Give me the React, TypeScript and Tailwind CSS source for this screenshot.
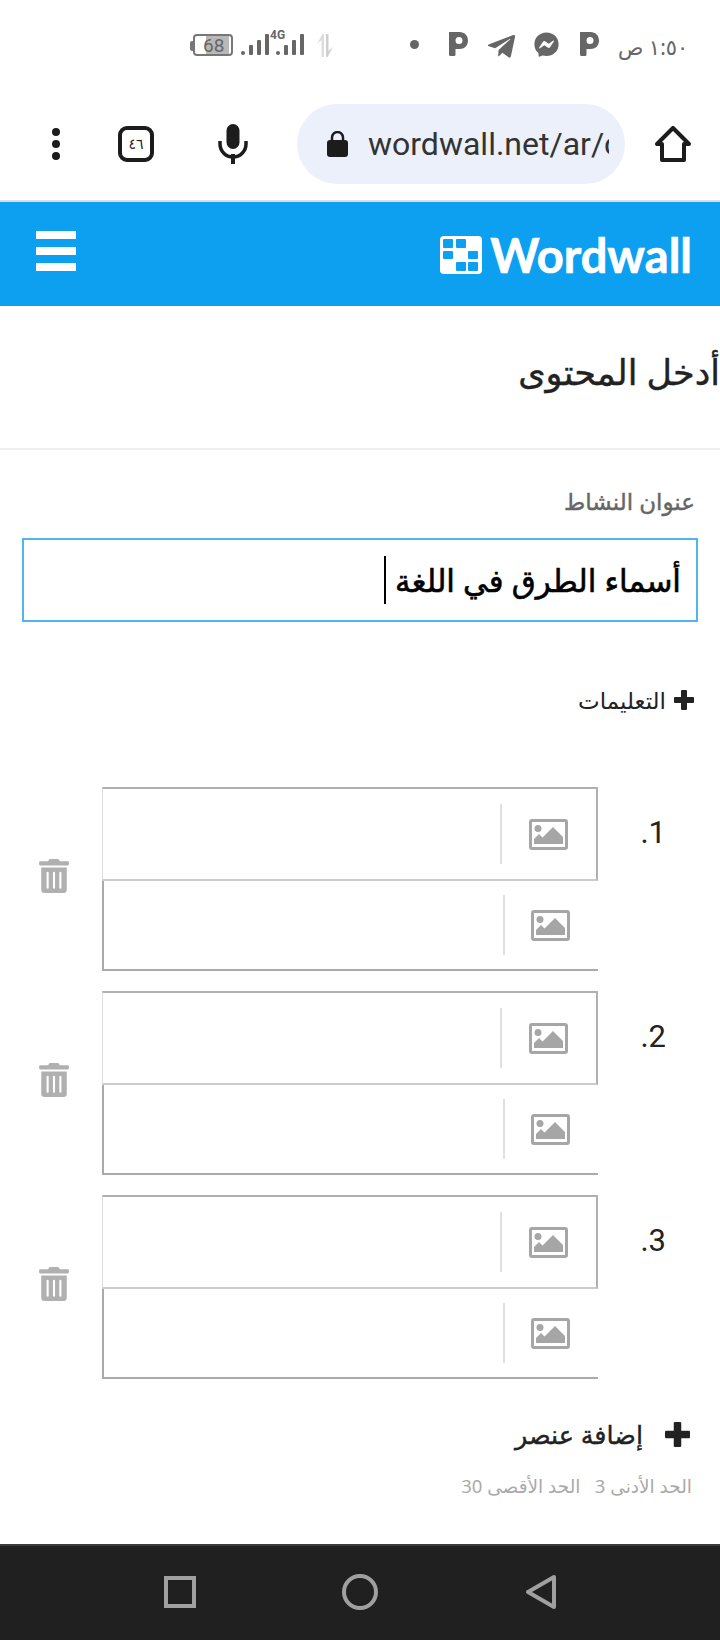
import { FaFacebookMessenger, FaTelegramPlane, FaTrashAlt } from "react-icons/fa";

const arabic = "font-['Noto_Sans','DejaVu_Sans',sans-serif]";

function PIcon() {
  return (
    <svg viewBox="0 0 19 24" className="w-[19px] h-[24px] text-[#666]" fill="currentColor">
      <path fillRule="evenodd" d="M0 0h10.500C15.500 0 19 3.500 19 8.500S15.500 17 10.500 17H6.500v5.500q0 1.500-1.500 1.500H1.500Q0 24 0 22.500zM10 5a3.500 3.500 0 1 0 0 7 3.500 3.500 0 0 0 0-7z" />
    </svg>
  );
}

function Signal() {
  return (
    <svg viewBox="0 0 63 21" className="w-[63px] h-[21px]" fill="#666">
      <rect x="0" y="17" width="4" height="4" rx="2" />
      <rect x="8" y="11" width="4" height="10" rx="1" />
      <rect x="16" y="6" width="4" height="15" rx="1" />
      <rect x="24" y="0" width="4" height="21" rx="1" />
      <rect x="35" y="17" width="4" height="4" rx="2" />
      <rect x="43" y="11" width="4" height="10" rx="1" />
      <rect x="51" y="6" width="4" height="15" rx="1" />
      <rect x="59" y="0" width="4" height="21" rx="1" />
    </svg>
  );
}

function ImageIcon() {
  return (
    <svg viewBox="0 0 39 31" className="w-[39px] h-[31px]">
      <rect x="1.500" y="1.500" width="36" height="28" rx="1.500" fill="none" stroke="#a6a6a6" strokeWidth="3" />
      <ellipse cx="9" cy="9.500" rx="3.500" ry="3.500" fill="#a6a6a6" />
      <path d="M5 25v-5l5-5 3.500 3.500L24 8l10 10v7z" fill="#a6a6a6" />
    </svg>
  );
}

function Plus({ size }: { size: string }) {
  return (
    <svg viewBox="0 0 20 20" className={size} fill="currentColor">
      <path d="M7 1a1 1 0 0 1 1-1h4a1 1 0 0 1 1 1v6h6a1 1 0 0 1 1 1v4a1 1 0 0 1-1 1h-6v6a1 1 0 0 1-1 1H8a1 1 0 0 1-1-1v-6H1a1 1 0 0 1-1-1V8a1 1 0 0 1 1-1h6z" />
    </svg>
  );
}

function Logo() {
  return (
    <svg viewBox="0 0 42 38" className="w-[42px] h-[38px]">
      <rect width="42" height="38" rx="4" fill="#fff" />
      <rect x="3" y="3" width="10" height="9" rx="1" fill="#0ea0f0" />
      <rect x="16" y="3" width="10" height="9" rx="1" fill="#0ea0f0" />
      <rect x="3" y="15" width="10" height="8" rx="1" fill="#0ea0f0" />
      <rect x="28" y="15" width="10" height="8" rx="1" fill="#0ea0f0" />
      <rect x="16" y="26" width="10" height="9" rx="1" fill="#0ea0f0" />
      <rect x="28" y="26" width="10" height="9" rx="1" fill="#0ea0f0" />
    </svg>
  );
}

function ItemRow({ n }: { n: number }) {
  return (
    <div className="flex h-[184px] mb-[20px]">
      <div className="w-[34px] ml-[37px] mt-[72px] text-[#b0b0b0] text-[34px] h-[36px]">
        <FaTrashAlt />
      </div>
      <div className="w-[496px] ml-[31px] flex flex-col">
        <div className="h-[94px] border-t-2 border-r-2 border-b-2 border-l border-t-[#b0b0b0] border-r-[#b0b0b0] border-b-[#cccccc] border-l-[#dddddd] flex items-center">
          <div className="w-[399px] h-[60px] border-r-2 border-r-[#e0e0e0]" />
          <div className="ml-[27px]"><ImageIcon /></div>
        </div>
        <div className="h-[90px] border-b-2 border-l-2 border-b-[#aaaaaa] border-l-[#aaaaaa] flex items-center">
          <div className="w-[401px] h-[60px] border-r-2 border-r-[#e0e0e0]" />
          <div className="ml-[26px]"><ImageIcon /></div>
        </div>
      </div>
      <div dir="rtl" className="ml-[40px] w-[28px] mt-[26px] text-[31px] leading-[40px] text-[#222] font-['Roboto',sans-serif]">{n}.</div>
    </div>
  );
}

export default function App() {
  return (
    <div className="w-[720px] h-[1640px] overflow-hidden bg-white flex flex-col">
      {/* status bar */}
      <div className="h-[104px] shrink-0 flex items-start pt-[32px]">
        <div className="ml-[190px] mt-[9px] w-[3px] h-[10px] bg-[#777] rounded-l-[2px]" />
        <div className="w-[40px] h-[22px] mt-[2px] border-2 border-[#777] rounded-[4px] flex items-center pl-[8px] bg-[linear-gradient(to_right,#fff_30%,#b8b8b8_30%,#b8b8b8_94%,#fff_94%)] text-[19px] leading-none text-[#666] font-['Roboto',sans-serif]">68</div>
        <div className="ml-[8px] relative mt-[2px]">
          <Signal />
          <span className="absolute left-[29px] -top-[5px] text-[12px] font-bold leading-none text-[#666] font-['Roboto',sans-serif]">4G</span>
        </div>
        <svg viewBox="0 0 18 23" className="ml-[12px] mt-[2px] w-[18px] h-[23px]">
          <path d="M5.500 23V6L1 10 6.500 0H8v23z" fill="#dddddd" />
          <path d="M10 0v23h1.500L17 13l-4.500 4V0z" fill="#cfcfcf" />
        </svg>
        <div className="ml-[76px] mt-[8px] w-[9px] h-[9px] rounded-full bg-[#666]" />
        <div className="ml-[30px]"><PIcon /></div>
        <div className="ml-[18px] -mt-[1px] text-[#666] text-[31px]"><FaTelegramPlane /></div>
        <div className="ml-[17px] text-[#666] text-[25px]"><FaFacebookMessenger /></div>
        <div className="ml-[21px]"><PIcon /></div>
        <div dir="rtl" className={`ml-[19px] mt-[2px] text-[21px] leading-[26px] text-[#666] whitespace-nowrap ${arabic}`}>١:٥٠ ص</div>
      </div>

      {/* browser toolbar */}
      <div className="h-[98px] shrink-0 border-b-2 border-b-[#dddddd] flex items-start">
        <div className="ml-[52px] mt-[24px] flex flex-col gap-[4px]">
          <div className="w-[8px] h-[8px] rounded-full bg-[#1c1c1c]" />
          <div className="w-[8px] h-[8px] rounded-full bg-[#1c1c1c]" />
          <div className="w-[8px] h-[8px] rounded-full bg-[#1c1c1c]" />
        </div>
        <div className={`ml-[58px] mt-[22px] w-[36px] h-[36px] border-[4px] border-[#1c1c1c] rounded-[9px] flex items-center justify-center text-[14px] leading-none text-[#222] ${arabic}`}>٤٦</div>
        <svg viewBox="0 0 30 40" className="ml-[64px] mt-[20px] w-[30px] h-[40px]" fill="#1c1c1c">
          <rect x="8.500" y="0" width="13" height="25" rx="6.500" />
          <path d="M2 17v3a13 13 0 0 0 26 0v-3" fill="none" stroke="#1c1c1c" strokeWidth="3.500" />
          <rect x="13" y="30" width="4" height="10" />
        </svg>
        <div className="ml-[49px] h-[80px] w-[328px] rounded-full bg-[#ecf0fa] flex items-center pl-[30px]">
          <svg viewBox="0 0 21 26" className="w-[21px] h-[26px] shrink-0" fill="#1c1c1c">
            <rect x="0" y="9" width="21" height="17" rx="3" />
            <path d="M5 10V6.500a5.500 5.500 0 0 1 11 0V10" fill="none" stroke="#1c1c1c" strokeWidth="2.500" />
          </svg>
          <div className="ml-[20px] w-[241px] overflow-hidden whitespace-nowrap text-[32px] leading-[40px] text-[#333] font-['Roboto',sans-serif]">wordwall.net/ar/c</div>
        </div>
        <svg viewBox="0 0 36 36" className="ml-[30px] mt-[22px] w-[36px] h-[36px]" fill="none" stroke="#1c1c1c" strokeWidth="4" strokeLinejoin="round">
          <path d="M18 2 2 18h5v16h22V18h5z" />
        </svg>
      </div>

      {/* site header */}
      <div className="h-[104px] shrink-0 bg-[#0ea0f0] flex items-start justify-between pt-[29px] pl-[36px] pr-[28px]">
        <div className="w-[40px] flex flex-col gap-[8px]">
          <div className="h-[8px] bg-white" />
          <div className="h-[8px] bg-white" />
          <div className="h-[8px] bg-white" />
        </div>
        <div className="flex items-start mt-[5px]">
          <Logo />
          <div className="ml-[8px] text-[47px] leading-[38px] font-bold text-white [-webkit-text-stroke:0.7px_white] font-['Lato',sans-serif]">Wordwall</div>
        </div>
      </div>

      {/* content */}
      <div dir="rtl" className={`flex-1 ${arabic}`}>
        <div className="h-[144px] border-b-2 border-b-[#eeeeee] pt-[44px] text-[35px] leading-[44px] font-medium text-[#222] [-webkit-text-stroke:0.4px_#222]">أدخل المحتوى</div>
        <div className="pr-[25px] pt-[35px] text-[23px] leading-[32px] font-medium text-[#666] [-webkit-text-stroke:0.4px_#666]">عنوان النشاط</div>
        <div className="mx-[22px] mt-[21px] h-[84px] border-2 border-[#4fb7ee] flex items-center pr-[15px] text-[31px] font-medium text-black [-webkit-text-stroke:0.6px_black]">
          <span>أسماء الطرق في اللغة</span>
          <span className="w-[2px] h-[48px] bg-black mr-[9px]" />
        </div>
        <div className="flex items-center mt-[64px] pr-[26px] text-[#222]">
          <Plus size="w-[20px] h-[20px]" />
          <span className="mr-[8px] text-[23px] leading-[28px]">التعليمات</span>
        </div>
        <div dir="ltr" className="mt-[73px]">
          <ItemRow n={1} />
          <ItemRow n={2} />
          <ItemRow n={3} />
        </div>
        <div className="flex items-center pr-[29px] pt-[18px] text-[#222]">
          <Plus size="w-[27px] h-[25px]" />
          <span className="mr-[21px] text-[25.500px] leading-[34px] font-medium [-webkit-text-stroke:0.4px_#222]">إضافة عنصر</span>
        </div>
        <div className="pr-[28px] mt-[23px] text-[18.500px] leading-[24px] text-[#aaaaaa]">الحد الأدنى 3&nbsp;&nbsp; الحد الأقصى 30</div>
      </div>

      {/* android nav */}
      <div className="h-[96px] shrink-0 bg-[#202020] border-t-2 border-t-[#3a3a3a] flex items-start pt-[28px]">
        <div className="ml-[164px] mt-[2px] w-[32px] h-[32px] border-[4px] border-[#a0a0a0]" />
        <div className="ml-[146px] w-[36px] h-[36px] border-[4px] border-[#a0a0a0] rounded-full" />
        <svg viewBox="0 0 32 36" className="ml-[147px] w-[32px] h-[36px]" fill="none" stroke="#a0a0a0" strokeWidth="4" strokeLinejoin="round">
          <path d="M29 3v30L3 18z" />
        </svg>
      </div>
    </div>
  );
}
